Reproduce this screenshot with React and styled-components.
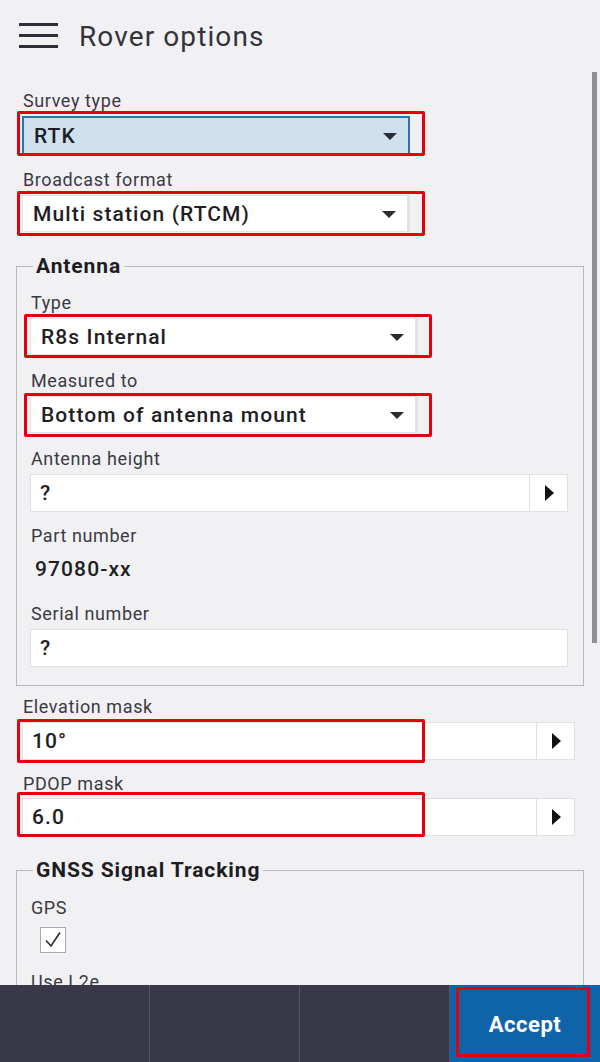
import React from 'react';
import styled, { createGlobalStyle } from 'styled-components';

const GlobalStyle = createGlobalStyle`
  html, body {
    margin: 0;
    padding: 0;
  }
  body {
    font-family: Roboto, "Liberation Sans", Arial, sans-serif;
    background: #f1f1f4;
  }
`;

const Page = styled.div`
  width: 600px;
  height: 1062px;
  display: flex;
  flex-direction: column;
  background: #f1f1f4;
  position: relative;
  overflow: hidden;
`;

const Header = styled.div`
  height: 72px;
  flex-shrink: 0;
  display: flex;
  align-items: center;
  padding-left: 19px;
  gap: 21px;
`;

const Title = styled.div`
  font-size: 28px;
  line-height: 33px;
  color: #33333b;
  letter-spacing: 1.1px;
`;

const Content = styled.div`
  flex: 1;
  overflow: hidden;
  padding: 0 16px;
`;

/* scroll thumb sits over the right edge of the content */
const ScrollThumb = styled.div`
  position: absolute;
  left: 592px;
  top: 72px;
  width: 5px;
  height: 571px;
  background: #8e8e93;
`;

const Group = styled.div`
  padding: 0 9px 0 6px;
`;

const Label = styled.div`
  margin-top: ${({ $mt }) => $mt}px;
  font-size: 18px;
  line-height: 20px;
  color: #3a3a42;
  padding-left: 1px;
  letter-spacing: 0.6px;
  white-space: nowrap;
`;

const Field = styled.div`
  position: relative;
  margin-top: ${({ $mt }) => $mt ?? 5}px;
`;

const Highlight = styled.div`
  position: absolute;
  left: ${({ $left }) => $left ?? -5}px;
  top: ${({ $top }) => $top}px;
  width: 408px;
  height: ${({ $height }) => $height}px;
  border: 3px solid #e5000d;
  border-radius: 2px;
  box-sizing: border-box;
  pointer-events: none;
`;

const SelectBox = styled.div`
  width: 388px;
  height: 37px;
  box-sizing: border-box;
  display: flex;
  align-items: center;
  justify-content: space-between;
  padding: 0 11px 0 10px;
  background: ${({ $focused }) => ($focused ? '#cfe1ef' : '#ffffff')};
  border: ${({ $focused }) => ($focused ? '2px solid #2a72b5' : '1px solid #e4e4e8')};
  border-right: ${({ $focused }) => ($focused ? '2px solid #2a72b5' : '3px solid #e2e2e6')};
  border-bottom: ${({ $focused }) => ($focused ? 'none' : '1px solid #e4e4e8')};
`;

const ValueText = styled.span`
  font-size: 21px;
  color: #1e1e24;
  font-weight: 500;
  letter-spacing: 1.1px;
`;

const Caret = styled.span`
  width: 0;
  height: 0;
  border-left: 7px solid transparent;
  border-right: 7px solid transparent;
  border-top: 7px solid #2b2b33;
  margin-top: 2px;
`;

const InputBox = styled.div`
  height: 38px;
  box-sizing: border-box;
  display: flex;
  align-items: stretch;
  background: #ffffff;
  border: 1px solid #e0e0e4;
`;

const InputValue = styled.div`
  flex: 1;
  display: flex;
  align-items: center;
  padding-left: 9px;
`;

const ArrowButton = styled.div`
  width: 37px;
  border-left: 1px solid #e0e0e4;
  display: flex;
  align-items: center;
  justify-content: center;
`;

const RightArrow = styled.span`
  width: 0;
  height: 0;
  border-top: 8px solid transparent;
  border-bottom: 8px solid transparent;
  border-left: 9px solid #111;
  margin-left: 2px;
`;

const Fieldset = styled.fieldset`
  margin: ${({ $mt }) => $mt}px 0 0 0;
  padding: 0 15px ${({ $pb }) => $pb}px 13px;
  border: 1px solid #b9b9be;
  min-width: 0;
`;

const Legend = styled.legend`
  margin-left: 3px;
  padding: 0 3px;
  font-size: 21px;
  line-height: 22px;
  font-weight: 700;
  color: #1c1c22;
  letter-spacing: 0.9px;
`;

const StaticValue = styled.div`
  margin-top: 11px;
  padding-left: 5px;
  font-size: 21px;
  line-height: 24px;
  font-weight: 500;
  color: #1e1e24;
  letter-spacing: 1.1px;
`;

const CheckBox = styled.div`
  margin: 9px 0 0 10px;
  width: 26px;
  height: 26px;
  box-sizing: border-box;
  background: #ffffff;
  border: 1px solid #a8a8ae;
  display: flex;
  align-items: center;
  justify-content: center;
`;

const Footer = styled.div`
  height: 77px;
  flex-shrink: 0;
  display: grid;
  grid-template-columns: repeat(4, 1fr);
  background: #393848;
`;

const FooterCell = styled.div`
  border-right: 1px solid #56556a;
`;

const AcceptCell = styled.div`
  position: relative;
  background: #0f63a8;
  color: #ffffff;
  font-size: 22px;
  font-weight: 700;
  letter-spacing: 0.5px;
  display: flex;
  align-items: center;
  justify-content: center;
  padding-top: 2px;
`;

const AcceptHighlight = styled.div`
  position: absolute;
  left: 6px;
  top: 2px;
  width: 134px;
  height: 70px;
  border: 3px solid #e5000d;
  box-sizing: border-box;
`;

const MenuIcon = () => (
  <svg width="39" height="26" viewBox="0 0 39 26">
    <rect x="0" y="0" width="39" height="3" fill="#2e2e38" />
    <rect x="0" y="11" width="39" height="3" fill="#2e2e38" />
    <rect x="0" y="22" width="39" height="3" fill="#2e2e38" />
  </svg>
);

const Select = ({ value, focused }) => (
  <SelectBox $focused={focused}>
    <ValueText>{value}</ValueText>
    <Caret />
  </SelectBox>
);

const TextInput = ({ value, arrow }) => (
  <InputBox>
    <InputValue>
      <ValueText>{value}</ValueText>
    </InputValue>
    {arrow && (
      <ArrowButton>
        <RightArrow />
      </ArrowButton>
    )}
  </InputBox>
);

const App = () => {
  return (
    <Page>
      <GlobalStyle />
      <Header>
        <MenuIcon />
        <Title>Rover options</Title>
      </Header>
      <Content>
        <Group>
          <Label $mt={19}>Survey type</Label>
          <Field>
            <Select value="RTK" focused />
            <Highlight $top={-5} $height={45} />
          </Field>
          <Label $mt={17}>Broadcast format</Label>
          <Field>
            <Select value="Multi station (RTCM)" />
            <Highlight $top={-4} $height={45} />
          </Field>
        </Group>

        <Fieldset $mt={23} $pb={18}>
          <Legend>Antenna</Legend>
          <Label $mt={16}>Type</Label>
          <Field>
            <Select value="R8s Internal" />
            <Highlight $left={-6} $top={-4} $height={44} />
          </Field>
          <Label $mt={16}>Measured to</Label>
          <Field>
            <Select value="Bottom of antenna mount" />
            <Highlight $left={-6} $top={-3} $height={44} />
          </Field>
          <Label $mt={16}>Antenna height</Label>
          <Field>
            <TextInput value="?" arrow />
          </Field>
          <Label $mt={14}>Part number</Label>
          <StaticValue>97080-xx</StaticValue>
          <Label $mt={23}>Serial number</Label>
          <Field>
            <TextInput value="?" />
          </Field>
        </Fieldset>

        <Group>
          <Label $mt={11}>Elevation mask</Label>
          <Field>
            <TextInput value="10°" arrow />
            <Highlight $top={-3} $height={44} />
          </Field>
          <Label $mt={14}>PDOP mask</Label>
          <Field $mt={4}>
            <TextInput value="6.0" arrow />
            <Highlight $top={-6} $height={45} />
          </Field>
        </Group>

        <Fieldset $mt={23} $pb={40}>
          <Legend>GNSS Signal Tracking</Legend>
          <Label $mt={17}>GPS</Label>
          <CheckBox>
            <svg width="20" height="20" viewBox="0 0 20 20">
              <path d="M3 10.5 L8 16 L17 2.5" fill="none" stroke="#2a2a30" strokeWidth="1.6" />
            </svg>
          </CheckBox>
          <Label $mt={19}>Use L2e</Label>
        </Fieldset>
      </Content>
      <Footer>
        <FooterCell />
        <FooterCell />
        <FooterCell />
        <AcceptCell>
          Accept
          <AcceptHighlight />
        </AcceptCell>
      </Footer>
      <ScrollThumb />
    </Page>
  );
};

export default App;
